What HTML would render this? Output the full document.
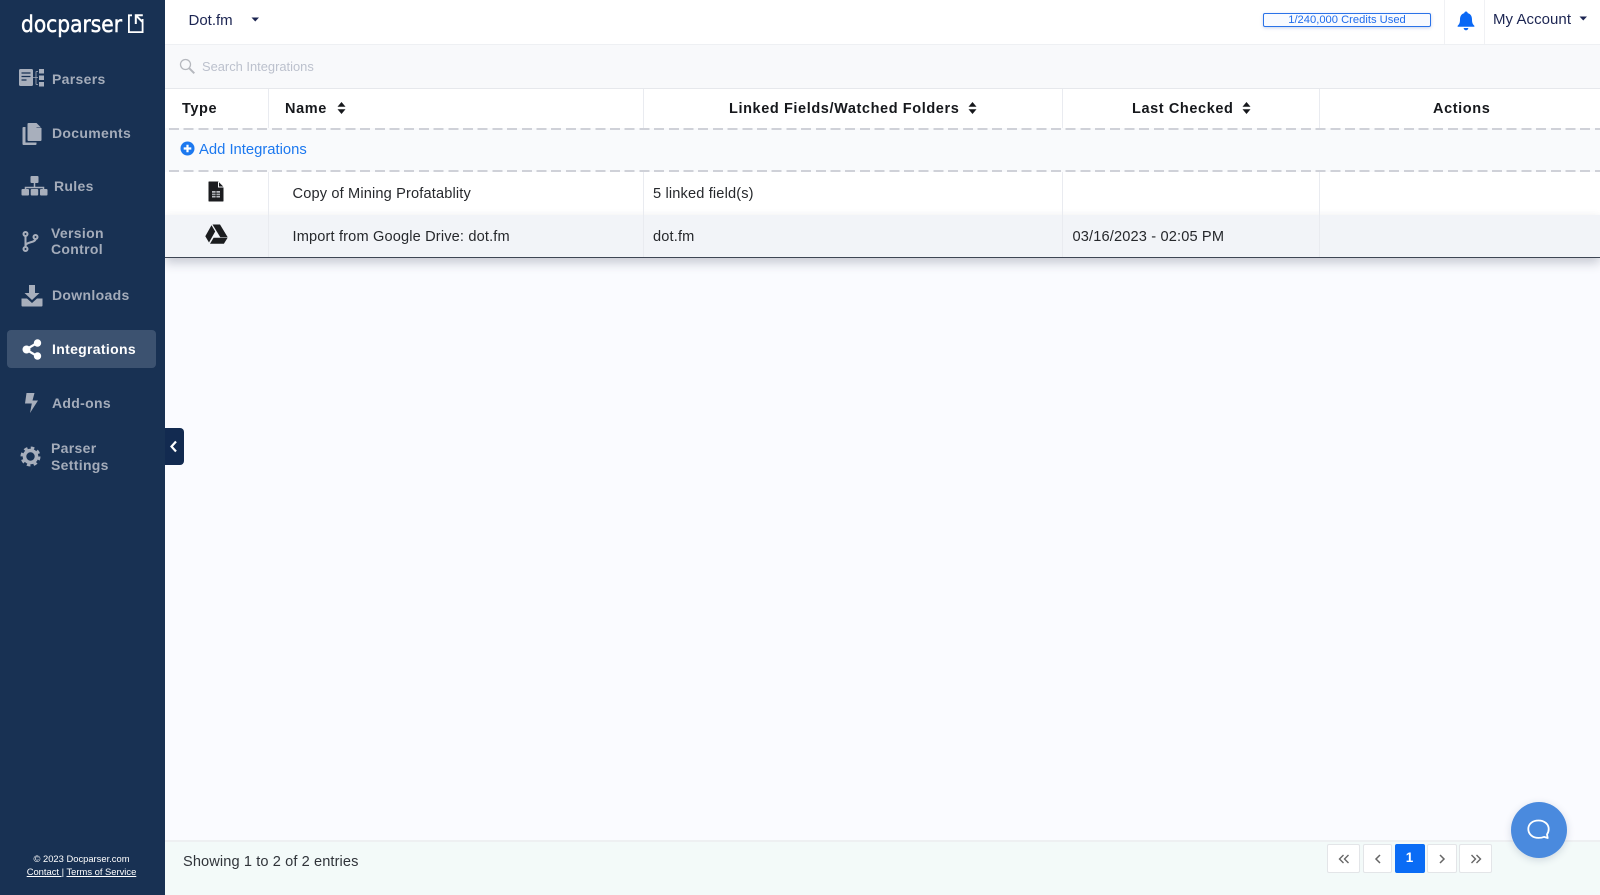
<!DOCTYPE html>
<html lang="en"><head><meta charset="utf-8"><title>Docparser Integrations</title>
<style>
*{box-sizing:border-box}
html,body{margin:0;padding:0;width:1600px;height:895px;overflow:hidden;background:#fafbff;font-family:"Liberation Sans",Arial,sans-serif;color:#212529}
.a{position:absolute;white-space:nowrap}
.t{position:absolute;white-space:nowrap;line-height:20px;height:20px}
#side{position:absolute;left:0;top:0;width:165px;height:895px;background:#183153}
.n{position:absolute;left:52px;white-space:nowrap;font-size:14px;font-weight:bold;letter-spacing:.32px;color:#a4acba;line-height:17px}
.th{font-size:14.5px;font-weight:bold;letter-spacing:.6px;color:#16181c}
.td{font-size:14.6px;color:#26282c;letter-spacing:.15px}
.v{position:absolute;width:1px;background:#e9ebf0}
.dash{position:absolute;left:169px;width:1431px;height:2px;background:repeating-linear-gradient(90deg,#cfd1d8 0,#cfd1d8 10px,transparent 10px,transparent 14.700px)}
.pg{position:absolute;top:844px;height:29px;background:#fff;border:1px solid #e3e5e8;border-radius:2px;text-align:center;color:#666;font-size:14px;line-height:26px}
.pg svg{left:50%;top:50%;margin:-5px 0 0 -6px}
svg{position:absolute;overflow:visible}
</style></head>
<body>
<!-- main areas -->
<div class="a" style="left:165px;top:0;width:1435px;height:45px;background:#fff;border-bottom:1px solid #eef0f3"></div>
<div class="a" style="left:165px;top:45px;width:1435px;height:44px;background:#f8f9fb;border-bottom:1px solid #e6e8ec"></div>
<div class="a" style="left:165px;top:89px;width:1435px;height:39px;background:#fff"></div>
<div class="a" style="left:165px;top:128px;width:1435px;height:44px;background:#f9fafc"></div>
<div class="dash" style="top:128px"></div>
<div class="dash" style="top:170px"></div>
<div class="a" style="left:165px;top:172px;width:1435px;height:43px;background:#fff"></div>
<div class="a" style="left:165px;top:215px;width:1435px;height:43px;background:#f2f4f8;border-bottom:1.5px solid #3e4654;box-shadow:0 5px 10px rgba(40,50,70,.24)"></div>
<div class="v" style="left:268px;top:89px;height:39px"></div>
<div class="v" style="left:643px;top:89px;height:39px"></div>
<div class="v" style="left:1062px;top:89px;height:39px"></div>
<div class="v" style="left:1319px;top:89px;height:39px"></div>
<div class="v" style="left:268px;top:172px;height:85px"></div>
<div class="v" style="left:643px;top:172px;height:85px"></div>
<div class="v" style="left:1062px;top:172px;height:85px"></div>
<div class="v" style="left:1319px;top:172px;height:85px"></div>
<div class="v" style="left:1444px;top:0;height:44px;background:#f0f1f4"></div>
<div class="v" style="left:1484px;top:0;height:44px;background:#f0f1f4"></div>
<div class="a" style="left:165px;top:840px;width:1435px;height:55px;background:#f3faf9;border-top:2px solid #eef0f2"></div>

<!-- sidebar -->
<div id="side">
<svg style="left:0;top:0" width="165" height="60"><text x="21" y="32" font-family="DejaVu Sans" font-size="23" fill="#fff" stroke="#fff" stroke-width=".5" textLength="101" lengthAdjust="spacingAndGlyphs">docparser</text>
<path d="M132 15.300H128.900V32.100H142.600V19" fill="none" stroke="#fff" stroke-width="1.800"/><path d="M135.800 24V15.300H142.800M136.300 15.800l6 6" fill="none" stroke="#fff" stroke-width="2"/></svg>

<svg style="left:18px;top:68px" width="28" height="20"><rect x="1" y="1" width="14" height="17" rx="1.500" fill="#a8afbc"/><path d="M3.500 5h9M3.500 8.500h9M3.500 12h5" stroke="#183153" stroke-width="1.300"/><path d="M15 9.500h5M18 3.500v13M18 3.500h2M18 16.500h2" stroke="#a8afbc" stroke-width=".8" fill="none"/><rect x="21" y="1" width="5" height="4.500" fill="#a8afbc"/><rect x="21" y="7.500" width="5" height="4.500" fill="#a8afbc"/><rect x="21" y="14" width="5" height="4.500" fill="#a8afbc"/></svg>
<div class="n" style="top:71px">Parsers</div>

<svg style="left:21px;top:122px" width="22" height="23"><path d="M6 1h8v5h5v12a1 1 0 0 1-1 1H6a1 1 0 0 1-1-1V2a1 1 0 0 1 1-1z" fill="#a8afbc" transform="translate(1.500 0)"/><path d="M15.500 1l4.500 4.500h-4.500z" fill="#a8afbc"/><path d="M4.500 5H2.500a1 1 0 0 0-1 1v16a1 1 0 0 0 1 1h12a1 1 0 0 0 1-1v-1.500H4.500z" fill="#a8afbc"/></svg>
<div class="n" style="top:125px">Documents</div>

<svg style="left:21px;top:175px" width="27" height="22"><rect x="9.500" y="1" width="8" height="7" rx="1" fill="#a8afbc"/><path d="M13.500 8v4.500M4.500 15v-2.500h18V15" fill="none" stroke="#a8afbc" stroke-width="1.500"/><rect x="0.500" y="14" width="7.500" height="6.500" rx="1" fill="#a8afbc"/><rect x="9.700" y="14" width="7.500" height="6.500" rx="1" fill="#a8afbc"/><rect x="19" y="14" width="7.500" height="6.500" rx="1" fill="#a8afbc"/></svg>
<div class="n" style="top:178px;left:54px">Rules</div>

<svg style="left:22px;top:230px" width="18" height="24"><g fill="none" stroke="#a8afbc" stroke-width="2"><circle cx="3.500" cy="4" r="2"/><circle cx="3.500" cy="19" r="2"/><circle cx="13.500" cy="7" r="2"/><path d="M3.500 6v11M13.500 9c0 4-10 2.500-10 7"/></g></svg>
<div class="n" style="top:224.500px;left:51px">Version</div>
<div class="n" style="top:241px;left:51px">Control</div>

<svg style="left:21px;top:284px" width="22" height="23"><path d="M8 1h6v8h4.500L11 16 3.500 9H8z" fill="#a8afbc"/><path d="M0.500 14.500H6l5 4.500 5-4.500h5.500v7a1 1 0 0 1-1 1h-19a1 1 0 0 1-1-1z" fill="#a8afbc"/></svg>
<div class="n" style="top:287px">Downloads</div>

<div class="a" style="left:7px;top:330px;width:149px;height:38px;background:#3c5270;border-radius:4px"></div>
<svg style="left:22px;top:339px" width="20" height="21"><path d="M4 10.500L15 4M4 10.500L15 17" stroke="#fff" stroke-width="2.200"/><circle cx="4.500" cy="10.500" r="4" fill="#fff"/><circle cx="15.500" cy="4" r="3.700" fill="#fff"/><circle cx="15.500" cy="17" r="3.700" fill="#fff"/></svg>
<div class="n" style="top:341px;color:#fff">Integrations</div>

<svg style="left:24px;top:392px" width="16" height="22"><path d="M2.500 1h8L8.500 8.500H14L6 21l1.800-9.500H1z" fill="#a8afbc"/></svg>
<div class="n" style="top:394.500px">Add-ons</div>

<svg style="left:20px;top:446px" width="21" height="21"><circle cx="10.500" cy="10.500" r="6" fill="none" stroke="#a8afbc" stroke-width="3.600"/><circle cx="10.500" cy="10.500" r="8.800" fill="none" stroke="#a8afbc" stroke-width="2.400" stroke-dasharray="3.600 3.310"/></svg>
<div class="n" style="top:440px;left:51px">Parser</div>
<div class="n" style="top:456.500px;left:51px">Settings</div>

<div class="a" style="left:0;top:852px;width:163px;text-align:center;color:#fff;font-size:9.400px;line-height:13px">© 2023 Docparser.com<br><span style="text-decoration:underline">Contact </span>| <span style="text-decoration:underline">Terms of Service</span></div>
</div>

<div class="a" style="left:165px;top:428px;width:19px;height:37px;background:#122a50;border-radius:0 4px 4px 0"></div>
<svg style="left:165px;top:428px" width="19" height="37"><path d="M11 13.500l-4.500 5 4.500 5" fill="none" stroke="#fff" stroke-width="2.200"/></svg>

<!-- top bar -->
<div class="t" style="left:188.500px;top:11px;font-size:15px;color:#1c2552">Dot.fm</div>
<svg style="left:251px;top:17px" width="9" height="6"><path d="M0.500 0.500h7.500L4.250 4.500z" fill="#1c2552"/></svg>
<div class="a" style="left:1263px;top:13px;width:168px;height:14px;background:#f8faff;border:1.5px solid #2a72e8;border-radius:2px;box-shadow:0 1px 3px rgba(40,80,180,.25);text-align:center;color:#1f6cec;font-size:11.200px;line-height:12.500px">1/240,000 Credits Used</div>
<svg style="left:1455.500px;top:10.500px" width="20" height="20"><path d="M10 0.500c1 0 1.700.7 1.700 1.600 3 .8 4.300 3.200 4.300 6.400 0 3.500.8 4.700 2.300 6.200.4.400.2 1-.4 1H2.100c-.6 0-.8-.6-.4-1C3.200 13.200 4 12 4 8.500c0-3.200 1.300-5.600 4.300-6.400C8.300 1.200 9 .5 10 .5zM7.700 17h4.600c0 1.200-1 2.300-2.300 2.300s-2.300-1.100-2.300-2.300z" fill="#0a68f5"/></svg>
<div class="t" style="left:1493px;top:9.500px;font-size:15px;letter-spacing:.05px;color:#1c2552">My Account</div>
<svg style="left:1579px;top:15.500px" width="9" height="6"><path d="M0.500 0.500h7.500L4.250 4.500z" fill="#1c2552"/></svg>

<!-- search -->
<svg style="left:179px;top:58px" width="17" height="17"><circle cx="6.500" cy="6.500" r="5" fill="none" stroke="#b5b8be" stroke-width="1.300"/><path d="M10.300 10.300l5 5" stroke="#b5b8be" stroke-width="2"/></svg>
<div class="t" style="left:202px;top:56.500px;font-size:12.900px;color:#bcc1cd">Search Integrations</div>

<!-- header -->
<div class="t th" style="left:182px;top:99px">Type</div>
<div class="t th" style="left:285px;top:99px">Name</div>
<svg style="left:337px;top:102px" width="9" height="12"><path d="M4.500 0L8.500 4.700H.5zM4.500 12L.5 7.300h8z" fill="#16181c"/></svg>
<div class="t th" style="left:729px;top:99px">Linked Fields/Watched Folders</div>
<svg style="left:968px;top:102px" width="9" height="12"><path d="M4.500 0L8.500 4.700H.5zM4.500 12L.5 7.300h8z" fill="#16181c"/></svg>
<div class="t th" style="left:1132px;top:99px">Last Checked</div>
<svg style="left:1242px;top:102px" width="9" height="12"><path d="M4.500 0L8.500 4.700H.5zM4.500 12L.5 7.300h8z" fill="#16181c"/></svg>
<div class="t th" style="left:1433px;top:99px">Actions</div>

<!-- add row -->
<svg style="left:180px;top:141px" width="15" height="15"><circle cx="7.500" cy="7.500" r="7" fill="#1c78ef"/><path d="M7.500 3.700v7.600M3.700 7.500h7.600" stroke="#fff" stroke-width="2.200"/></svg>
<div class="t" style="left:199px;top:140px;font-size:14.800px;color:#1c78ef">Add Integrations</div>

<!-- rows -->
<svg style="left:208px;top:181px" width="16" height="21"><path d="M1 1h9l5 5v14H1z" fill="#1b1c1f" stroke="#1b1c1f" stroke-linejoin="round"/><path d="M10.500 1v5h5" fill="none" stroke="#f4f5f7" stroke-width="1"/><rect x="4" y="10" width="8" height="6.500" fill="#b9bbc0"/><path d="M4 12.200h8M4 14.300h8M8 10v6.500" stroke="#1b1c1f" stroke-width=".8"/></svg>
<div class="t td" style="left:292.500px;top:184px">Copy of Mining Profatablity</div>
<div class="t td" style="left:653px;top:184px">5 linked field(s)</div>

<svg style="left:204.500px;top:224px" width="23" height="20"><path d="M7.500 0.500h7.500l7.700 12.800h-7.400z" fill="#1b1c1f"/><path d="M6.500 1.200l3.700 6.300L4 18.500.3 12.300z" fill="#1b1c1f"/><path d="M8.600 13.800h14l-3.700 6H5z" fill="#1b1c1f"/></svg>
<div class="t td" style="left:292.500px;top:226.500px">Import from Google Drive: dot.fm</div>
<div class="t td" style="left:653px;top:226.500px">dot.fm</div>
<div class="t td" style="left:1072.500px;top:226.500px">03/16/2023 - 02:05 PM</div>

<!-- footer -->
<div class="t td" style="left:183px;top:852px;letter-spacing:.1px;color:#30343a">Showing 1 to 2 of 2 entries</div>
<div class="pg" style="left:1327px;width:33px"><svg width="12" height="10"><path d="M5.500 1L1.500 5l4 4M10.500 1L6.500 5l4 4" fill="none" stroke="#666" stroke-width="1.400"/></svg></div>
<div class="pg" style="left:1363px;width:29px"><svg width="12" height="10"><path d="M8 1L4 5l4 4" fill="none" stroke="#666" stroke-width="1.500"/></svg></div>
<div class="pg" style="left:1394.500px;width:30px;background:#0a6cf5;border-color:#0a6cf5;color:#fff;font-weight:bold;font-size:13.500px">1</div>
<div class="pg" style="left:1427px;width:30px"><svg width="12" height="10"><path d="M4 1l4 4-4 4" fill="none" stroke="#666" stroke-width="1.500"/></svg></div>
<div class="pg" style="left:1459px;width:33px"><svg width="12" height="10"><path d="M1.500 1l4 4-4 4M6.500 1l4 4-4 4" fill="none" stroke="#666" stroke-width="1.400"/></svg></div>

<div class="a" style="left:1511px;top:802px;width:56px;height:56px;border-radius:50%;background:#4a8ade;box-shadow:0 2px 8px rgba(40,60,100,.18)"></div>
<svg style="left:1527px;top:819px" width="24" height="22"><path d="M11.500 1.500c5.800 0 10.200 3.500 10.200 8.500 0 2.300-.7 4-1.700 5.400l.7 3.600-3.700-1.100c-1.600.7-3.400 1-5.500 1-5.800 0-10.200-3.700-10.200-8.900s4.400-8.500 10.200-8.500z" fill="none" stroke="#fff" stroke-width="1.800" stroke-linejoin="round"/></svg>
</body></html>
